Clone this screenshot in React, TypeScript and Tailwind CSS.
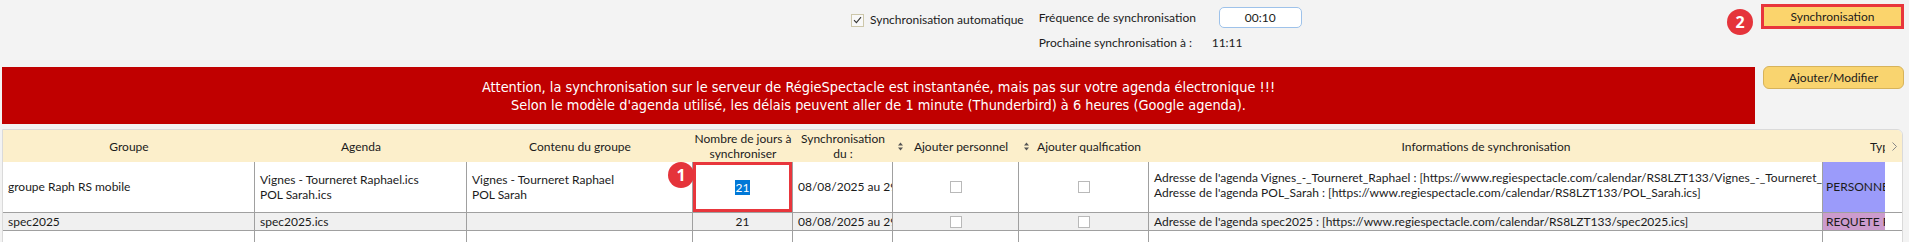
import React from "react";

const cols = [
  "w-[252px]",
  "w-[212px]",
  "w-[226px]",
  "w-[100px]",
  "w-[100px]",
  "w-[126px]",
  "w-[130px]",
  "w-[674px]",
  "w-[62px]",
  "w-[17px]",
];

const SortIcon = () => (
  <svg width="5" height="9" viewBox="0 0 5 9" className="shrink-0">
    <path d="M2.5 0.5 L5 3.5 H0 Z M2.5 8.5 L0 5.5 H5 Z" fill="#555" />
  </svg>
);

const Box = () => (
  <div className="h-[12px] w-[12px] border border-[#b9b9b9] bg-white"></div>
);

const Badge = ({n}: {n: string}) => (
  <div className="flex h-[26px] w-[26px] items-center justify-center rounded-full bg-[#e5343b] font-['Open_Sans',sans-serif] text-[16px] font-bold leading-none text-white">
    {n}
  </div>
);

const Cell = ({w, className = "", children}: {w: string; className?: string; children?: React.ReactNode}) => (
  <div className={`${w} shrink-0 overflow-hidden whitespace-nowrap border-r border-[#a0a0a0] ${className}`}>
    {children}
  </div>
);

export default function App() {
  return (
    <div className="h-[242px] w-[1909px] overflow-hidden bg-[#f3f3f3] font-['Lato',sans-serif] text-[12px] text-[#1b1b1b]">
      {/* barre du haut */}
      <div className="flex h-[66px]">
        <div className="ml-[851px] mt-[13px] flex h-[14px] items-center gap-[6px]">
          <div className="flex h-[13px] w-[13px] items-center justify-center border border-[#cdc7aa] bg-[#f8f8f8]">
            <svg width="9" height="8" viewBox="0 0 9 8">
              <path d="M1 4.2 L3.4 6.6 L8 1.2" stroke="#333" strokeWidth="1.1" fill="none" />
            </svg>
          </div>
          <span>Synchronisation automatique</span>
        </div>
        <div className="ml-[15px] mt-[7px] flex flex-col">
          <div className="flex h-[21px] items-center">
            <span className="w-[180px]">Fréquence de synchronisation</span>
            <div className="flex h-[21px] w-[83px] items-center justify-center rounded-[5px] border-[1.5px] border-[#9ec2ea] bg-white">
              00:10
            </div>
          </div>
          <div className="mt-[7px] flex h-[16px] items-center">
            <span className="w-[173px]">Prochaine synchronisation à :</span>
            <span>11:11</span>
          </div>
        </div>
        <div className="relative ml-auto mr-[5px] mt-[4px] h-[25px] w-[143px]">
          <div className="absolute left-[-34px] top-[5px]">
            <Badge n="2" />
          </div>
          <div className="flex h-full w-full items-center justify-center border-[3px] border-[#e8363c] bg-[#fbd46c]">
            Synchronisation
          </div>
        </div>
      </div>

      {/* bandeau */}
      <div className="flex items-start">
        <div className="ml-[2px] mt-[1px] flex h-[57px] w-[1753px] flex-col items-center justify-center bg-[#c00000] font-['DejaVu_Sans_Condensed',sans-serif] text-[14.4px] leading-[18px] text-white">
          <p>Attention, la synchronisation sur le serveur de RégieSpectacle est instantanée, mais pas sur votre agenda électronique !!!</p>
          <p>Selon le modèle d'agenda utilisé, les délais peuvent aller de 1 minute (Thunderbird) à 6 heures (Google agenda).</p>
        </div>
        <div className="ml-[8px] flex h-[23px] w-[141px] items-center justify-center rounded-[6px] border border-[#d7b35a] bg-[#f9d46f]">
          Ajouter/Modifier
        </div>
      </div>

      {/* tableau */}
      <div className="ml-[2px] mt-[5px] w-[1901px] overflow-hidden rounded-tr-[6px] border border-[#dadada] bg-white">
        <div className="flex h-[32px] bg-[#fcefcb] leading-[15px]">
          <div className={`${cols[0]} flex items-center justify-center`}>Groupe</div>
          <div className={`${cols[1]} flex items-center justify-center`}>Agenda</div>
          <div className={`${cols[2]} flex items-center justify-center`}>Contenu du groupe</div>
          <div className={`${cols[3]} flex flex-col items-center justify-center`}>
            <span>Nombre de jours à</span>
            <span>synchroniser</span>
          </div>
          <div className={`${cols[4]} flex flex-col items-center justify-center`}>
            <span>Synchronisation</span>
            <span>du :</span>
          </div>
          <div className={`${cols[5]} flex items-center pl-[5px]`}>
            <SortIcon />
            <span className="flex-1 text-center">Ajouter personnel</span>
          </div>
          <div className={`${cols[6]} flex items-center overflow-hidden whitespace-nowrap pl-[5px]`}>
            <SortIcon />
            <span className="flex-1 text-center">Ajouter qualfication</span>
          </div>
          <div className={`${cols[7]} flex items-center justify-center`}>Informations de synchronisation</div>
          <div className={`${cols[8]} flex items-center overflow-hidden whitespace-nowrap pl-[47px]`}>Type</div>
          <div className={`${cols[9]} flex items-center pl-[7px]`}>
            <svg width="5" height="9" viewBox="0 0 5 9">
              <path d="M0.5 0.5 L4.5 4.5 L0.5 8.5" stroke="#888" strokeWidth="1" fill="none" />
            </svg>
          </div>
        </div>

        <div className="flex h-[51px] border-b border-[#a0a0a0]">
          <Cell w={cols[0]} className="flex items-center pl-[5px]">groupe Raph RS mobile</Cell>
          <Cell w={cols[1]} className="flex flex-col justify-center pl-[5px] leading-[15px]">
            <span>Vignes - Tourneret Raphael.ics</span>
            <span>POL Sarah.ics</span>
          </Cell>
          <Cell w={cols[2]} className="flex flex-col justify-center pl-[5px] leading-[15px]">
            <span>Vignes - Tourneret Raphael</span>
            <span>POL Sarah</span>
          </Cell>
          <div className={`${cols[3]} relative flex shrink-0 items-center justify-center border-r border-[#a0a0a0]`}>
            <span className="bg-[#0078d7] px-[1px] leading-[15px] text-white">21</span>
            <div className="absolute inset-0 border-[3px] border-[#e8363c]"></div>
            <div className="absolute left-[-25px] top-[0px]">
              <Badge n="1" />
            </div>
          </div>
          <Cell w={cols[4]} className="flex items-center pl-[5px]">08/08/2025 au 29/08/2025</Cell>
          <Cell w={cols[5]} className="flex items-center justify-center"><Box /></Cell>
          <Cell w={cols[6]} className="flex items-center justify-center"><Box /></Cell>
          <Cell w={cols[7]} className="flex flex-col pl-[5px] pt-[8px] leading-[15px]">
            <span>Adresse de l'agenda Vignes_-_Tourneret_Raphael : [https://www.regiespectacle.com/calendar/RS8LZT133/Vignes_-_Tourneret_Raphael.ics]</span>
            <span>Adresse de l'agenda POL_Sarah : [https://www.regiespectacle.com/calendar/RS8LZT133/POL_Sarah.ics]</span>
          </Cell>
          <div className={`${cols[8]} flex shrink-0 items-center overflow-hidden whitespace-nowrap bg-[#9b9bfa] pl-[3px]`}>PERSONNEL</div>
          <div className={cols[9]}></div>
        </div>

        <div className="flex h-[18px] border-b border-[#a0a0a0] bg-[#f0f0f0] leading-[15px]">
          <Cell w={cols[0]} className="flex items-center pl-[5px]">spec2025</Cell>
          <Cell w={cols[1]} className="flex items-center pl-[5px]">spec2025.ics</Cell>
          <Cell w={cols[2]}></Cell>
          <Cell w={cols[3]} className="flex items-center justify-center">21</Cell>
          <Cell w={cols[4]} className="flex items-center pl-[5px]">08/08/2025 au 29/08/2025</Cell>
          <Cell w={cols[5]} className="flex items-center justify-center"><Box /></Cell>
          <Cell w={cols[6]} className="flex items-center justify-center"><Box /></Cell>
          <Cell w={cols[7]} className="flex items-center pl-[5px]">
            Adresse de l'agenda spec2025 : [https://www.regiespectacle.com/calendar/RS8LZT133/spec2025.ics]
          </Cell>
          <div className={`${cols[8]} flex shrink-0 items-center overflow-hidden whitespace-nowrap bg-[#cc9bcd] pl-[3px]`}>REQUETE PERSO</div>
          <div className={`${cols[9]} bg-white`}></div>
        </div>

        <div className="flex h-[20px]">
          <Cell w={cols[0]}></Cell>
          <Cell w={cols[1]}></Cell>
          <Cell w={cols[2]}></Cell>
          <Cell w={cols[3]}></Cell>
          <Cell w={cols[4]}></Cell>
          <Cell w={cols[5]}></Cell>
          <Cell w={cols[6]}></Cell>
          <Cell w={cols[7]}></Cell>
          <div className={cols[8]}></div>
          <div className={cols[9]}></div>
        </div>
      </div>
    </div>
  );
}
